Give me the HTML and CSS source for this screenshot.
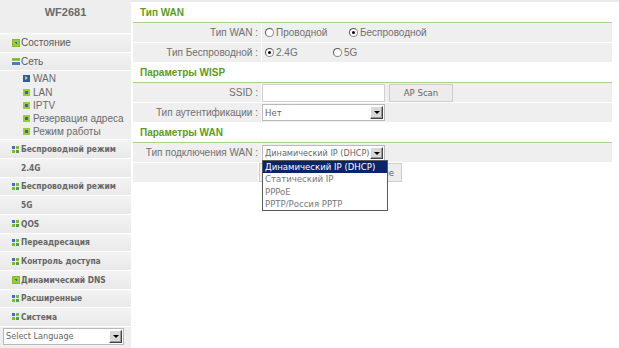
FILE: index.html
```html
<!DOCTYPE html>
<html lang="ru">
<head>
<meta charset="utf-8">
<title>WF2681</title>
<link rel="stylesheet" href="styles.css">
</head>
<body>
<div class="page">
  <aside class="sidebar">
    <div class="brand">WF2681</div>
    <ul class="menu">
      <li class="item"><span class="ic ic-plus"></span>Состояние</li>
      <li class="item"><span class="ic ic-open"></span>Сеть</li>
      <li class="sub">
        <div class="subitem"><span class="sic sic-active"></span>WAN</div>
        <div class="subitem"><span class="sic"></span>LAN</div>
        <div class="subitem"><span class="sic"></span>IPTV</div>
        <div class="subitem"><span class="sic"></span>Резервация адреса</div>
        <div class="subitem"><span class="sic"></span>Режим работы</div>
      </li>
      <li class="item bold"><span class="ic ic-grid"><i></i><i></i><i></i><i></i></span>Беспроводной режим</li>
      <li class="item bold plain">2.4G</li>
      <li class="item bold"><span class="ic ic-grid"><i></i><i></i><i></i><i></i></span>Беспроводной режим</li>
      <li class="item bold plain">5G</li>
      <li class="item bold"><span class="ic ic-grid"><i></i><i></i><i></i><i></i></span>QOS</li>
      <li class="item bold"><span class="ic ic-grid"><i></i><i></i><i></i><i></i></span>Переадресация</li>
      <li class="item bold"><span class="ic ic-grid"><i></i><i></i><i></i><i></i></span>Контроль доступа</li>
      <li class="item bold"><span class="ic ic-plus"></span>Динамический DNS</li>
      <li class="item bold"><span class="ic ic-grid"><i></i><i></i><i></i><i></i></span>Расширенные</li>
      <li class="item bold"><span class="ic ic-grid"><i></i><i></i><i></i><i></i></span>Система</li>
    </ul>
    <div class="lang">
      <div class="select lang-select"><span class="select-text">Select Language</span><span class="arrow"></span></div>
    </div>
  </aside>

  <main class="content">
    <section class="group">
      <h2 class="group-title">Тип WAN</h2>
      <div class="row">
        <div class="label">Тип WAN :</div>
        <div class="value">
          <span class="opt opt-wan"><span class="radio"></span>Проводной</span>
          <span class="opt"><span class="radio checked"></span>Беспроводной</span>
        </div>
      </div>
      <div class="row">
        <div class="label">Тип Беспроводной :</div>
        <div class="value">
          <span class="opt opt-band"><span class="radio checked"></span>2.4G</span>
          <span class="opt"><span class="radio"></span>5G</span>
        </div>
      </div>
    </section>

    <section class="group">
      <h2 class="group-title">Параметры WISP</h2>
      <div class="row">
        <div class="label">SSID :</div>
        <div class="value tight">
          <span class="textbox"></span>
          <span class="btn scan-btn">AP Scan</span>
        </div>
      </div>
      <div class="row">
        <div class="label">Тип аутентификации :</div>
        <div class="value tight">
          <div class="select auth-select"><span class="select-text">Нет</span><span class="arrow"></span></div>
        </div>
      </div>
    </section>

    <section class="group">
      <h2 class="group-title">Параметры WAN</h2>
      <div class="row">
        <div class="label">Тип подключения WAN :</div>
        <div class="value tight">
          <div class="select wan-select"><span class="select-text">Динамический IP (DHCP)</span><span class="arrow"></span></div>
        </div>
      </div>
      <div class="row row-actions">
        <div class="label"></div>
        <div class="actions">
          <span class="btn apply-btn">Применить изменение</span>
        </div>
      </div>
      <ul class="dropdown">
        <li class="dd-opt active">Динамический IP (DHCP)</li>
        <li class="dd-opt">Статический IP</li>
        <li class="dd-opt">PPPoE</li>
        <li class="dd-opt">PPTP/Россия PPTP</li>
      </ul>
    </section>
  </main>
</div>
</body>
</html>
```

FILE: styles.css
```css
* { box-sizing: border-box; }
html, body { margin: 0; padding: 0; background: #fff; }
body {
  width: 619px;
  height: 348px;
  overflow: hidden;
  font-family: "Liberation Sans", Arial, sans-serif;
  font-size: 10px;
  color: #666;
}
.page {
  display: flex;
  height: 348px;
}

/* ---------- sidebar ---------- */
.sidebar {
  width: 131px;
  flex: none;
  background: #eeeeee;
  display: flex;
  flex-direction: column;
}
.brand {
  height: 33px;
  padding-top: 6px;
  text-align: center;
  font-weight: bold;
  font-size: 11px;
  color: #6b6b6b;
}
.menu {
  list-style: none;
  margin: 0;
  padding: 0;
}
.item {
  height: 18.67px;
  border-top: 1px solid #fff;
  background: linear-gradient(#f3f3f3, #e9e9e9);
  display: flex;
  align-items: center;
  padding-left: 12px;
  font-size: 10px;
  color: #5a5a5a;
}
.item.bold {
  font-weight: bold;
  font-family: "DejaVu Sans Condensed", "DejaVu Sans", sans-serif;
  font-size: 8.4px;
  color: #666;
}
.item.plain { padding-left: 21px; }
.sub {
  border-top: 1px solid #fff;
  padding: 1px 0 1px 23px;
  background: #efefef;
}
.subitem {
  height: 13.2px;
  display: flex;
  align-items: center;
  font-size: 10px;
  color: #6a6a6a;
}

.ic {
  width: 8px;
  height: 8px;
  margin-right: 1px;
  flex: none;
  position: relative;
}
.ic-plus {
  background: #9acd32;
  border: 1px solid #86b82a;
}
.ic-plus::before, .ic-plus::after {
  content: "";
  position: absolute;
  background: #2f5fb0;
}
.ic-plus::before { left: 2px; top: 2.5px; width: 2px; height: 1px; }
.ic-plus::after { left: 2.5px; top: 2px; width: 1px; height: 2px; }
.ic-open {
  height: 7px;
  background: linear-gradient(#7fbf3a 0 3px, #ffffff 3px 4px, #4a7cc2 4px);
}
.ic-grid {
  display: grid;
  grid-template-columns: 3px 3px;
  grid-template-rows: 3px 3px;
  gap: 1px;
  width: 7px;
  height: 7px;
  margin-right: 2px;
}
.ic-grid i { display: block; background: #7cbc2c; }
.ic-grid i:first-child { background: #3e6cc0; }
.ic-grid i:last-child { background: #5a9a48; }

.sic {
  width: 7px;
  height: 7px;
  margin-right: 3px;
  flex: none;
  background: #9acd32;
  position: relative;
}
.sic::after {
  content: "";
  position: absolute;
  left: 2px; top: 2px;
  width: 3px; height: 3px;
  background: #3563b4;
}
.sic-active { background: #2f5aa8; }
.sic-active::after {
  left: 2px; top: 1px;
  width: 0; height: 0;
  background: none;
  border-left: 3px solid #b8e04a;
  border-top: 2.5px solid transparent;
  border-bottom: 2.5px solid transparent;
}

.lang {
  flex: 1;
  border-top: 1px solid #fff;
  padding: 1px 0 0 3px;
}

/* ---------- selects ---------- */
.select {
  display: flex;
  align-items: center;
  background: #fff;
  border: 1px solid #b9b9b9;
  font-family: "DejaVu Sans Condensed", "DejaVu Sans", sans-serif;
  font-size: 9.5px;
  color: #666;
  position: relative;
}
.select-text {
  flex: 1;
  padding-left: 2px;
  white-space: nowrap;
  overflow: hidden;
}
.arrow {
  width: 13px;
  height: 13px;
  margin-right: 1px;
  flex: none;
  background: #d8d8d8;
  border: 1px solid;
  border-color: #fff #404040 #404040 #fff;
  box-shadow: inset -1px -1px 0 #9a9a9a;
  position: relative;
}
.arrow::after {
  content: "";
  position: absolute;
  left: 3px; top: 4px;
  border-left: 3px solid transparent;
  border-right: 3px solid transparent;
  border-top: 3px solid #000;
}
.lang-select { width: 121px; height: 17px; font-size: 9px; }

/* ---------- content ---------- */
.content {
  flex: 1;
  padding: 3px 7px 0 2px;
  background: linear-gradient(#e9e9e9 0 2px, #fff 2px);
}
.group { position: relative; }
.group-title {
  margin: 0;
  height: 20px;
  border-bottom: 1px solid #a9d18e;
  padding: 4px 0 0 7px;
  font-size: 10px;
  font-weight: bold;
  color: #5d9c21;
}
.row {
  display: grid;
  grid-template-columns: 128px 1fr;
  column-gap: 1px;
  height: 20px;
  border-bottom: 1px solid #fff;
}
.label, .value {
  background: #efefef;
  display: flex;
  align-items: center;
}
.label {
  justify-content: flex-end;
  padding-right: 3px;
  white-space: nowrap;
  color: #6f6f6f;
}
.value { padding-left: 3px; color: #6f6f6f; }
.value.tight { padding-left: 0; }

.opt { display: inline-flex; align-items: center; }
.opt-wan { width: 84px; }
.opt-band { width: 68px; }
.radio {
  width: 9px;
  height: 9px;
  border-radius: 50%;
  border: 1px solid #8a8a8a;
  border-top-color: #555;
  border-left-color: #555;
  background: #fff;
  margin-right: 2px;
  position: relative;
}
.radio.checked::after {
  content: "";
  position: absolute;
  left: 2px; top: 2px;
  width: 3px; height: 3px;
  border-radius: 50%;
  background: #000;
}

.textbox {
  width: 123px;
  height: 18px;
  background: #fff;
  border: 1px solid #cfcfcf;
}
.btn {
  display: inline-flex;
  align-items: center;
  justify-content: center;
  height: 18px;
  background: #ececec;
  border: 1px solid #cdcdcd;
  font-family: "DejaVu Sans Condensed", "DejaVu Sans", sans-serif;
  font-size: 9.5px;
  color: #666;
}
.scan-btn { width: 64px; margin-left: 4px; }
.auth-select { width: 123px; height: 17px; }
.wan-select { width: 123px; height: 16px; font-size: 9px; }
.wan-select .arrow { height: 12px; }
.wan-select .select-text { padding-left: 2px; }

.row-actions {
  grid-template-columns: 125px auto 1fr;
  background: #fff;
}
.row-actions .label { background: #efefef; }
.actions { display: flex; align-items: center; }
.apply-btn {
  width: 143px;
  height: 19px;
  justify-content: flex-end;
  padding-right: 7px;
}

.dropdown {
  position: absolute;
  left: 129px;
  top: 37px;
  width: 126px;
  margin: 0;
  padding: 0;
  list-style: none;
  background: #fff;
  border: 1px solid #5a5a5a;
  font-family: "DejaVu Sans Condensed", "DejaVu Sans", sans-serif;
  font-size: 9.5px;
  color: #777;
}
.dd-opt {
  height: 12.3px;
  line-height: 12px;
  padding-left: 2px;
  white-space: nowrap;
}
.dd-opt.active { background: #0a246a; color: #fff; }
```
